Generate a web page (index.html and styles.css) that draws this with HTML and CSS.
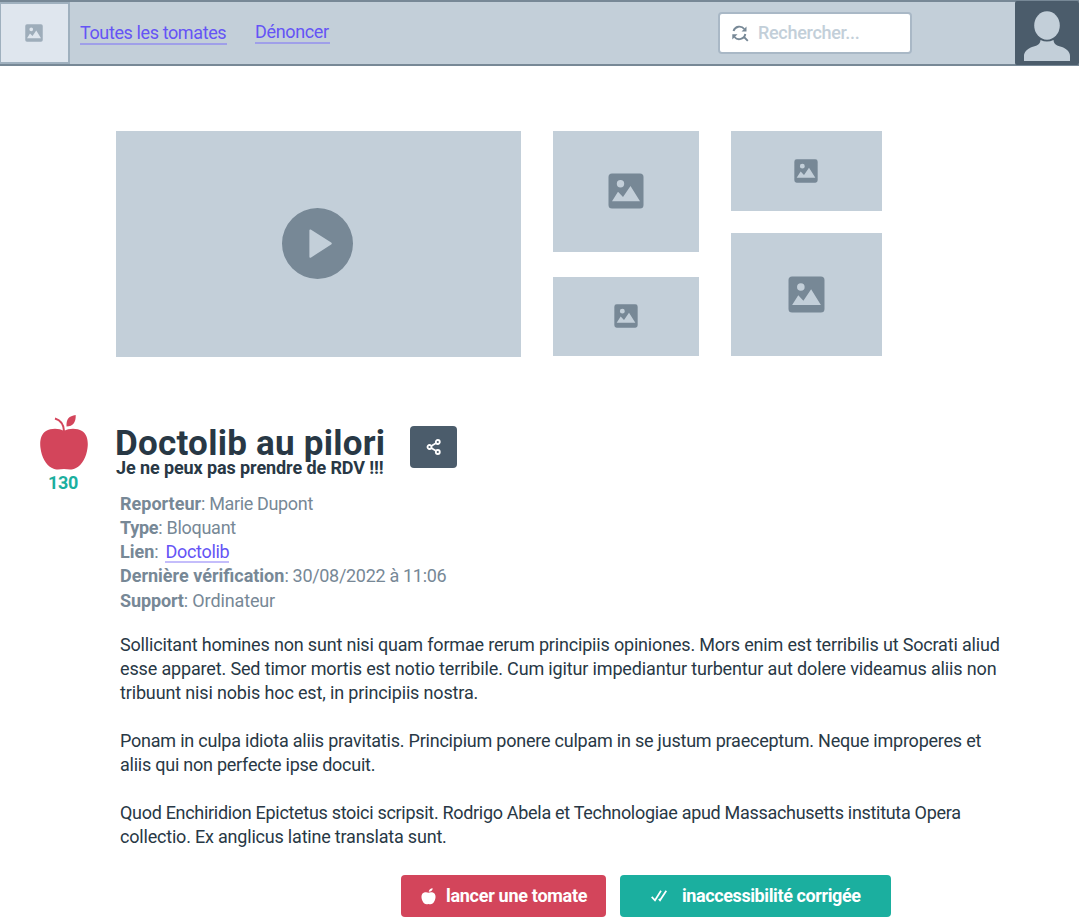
FILE: index.html
```html
<!DOCTYPE html>
<html lang="fr">
<head>
<meta charset="utf-8">
<title>Doctolib au pilori</title>
<link rel="stylesheet" href="styles.css">
</head>
<body>
<svg class="defs" width="0" height="0" aria-hidden="true">
  <symbol id="image" viewBox="0 0 36 36"><path fill-rule="evenodd" d="M4 .5H32a3.500 3.500 0 0 1 3.500 3.500V32a3.500 3.500 0 0 1-3.500 3.500H4a3.500 3.500 0 0 1-3.500-3.500V4a3.500 3.500 0 0 1 3.500-3.500ZM12.500 7a3.700 3.700 0 1 0 0 7.400a3.700 3.700 0 0 0 0-7.400ZM4 28.300H32L22.500 13L15 24L10 18.800Z"/></symbol>
  <symbol id="apple" viewBox="0 0 48 55"><path d="M24 16C29 13 37 13 42 16C47 19 48.500 26 47.500 33C46.500 42 42 50 36 53C31 55.500 28 54 24 54C20 54 17 55.500 12 53C6 50 1.500 42 .5 33C-.5 26 1 19 6 16C11 13 19 13 24 16Z"/><path d="M26.500 11.500C26 4 29 1 35.700 0C36 7 33 11.500 26.500 11.500Z"/><path d="M15 3.500C20 5 23.700 9 24 16" fill="none" stroke="currentColor" stroke-width="2"/></symbol>
</svg>
<header class="topbar">
  <a class="logo"><svg class="icon-logo"><use href="#image"/></svg></a>
  <nav class="nav">
    <a class="link link-all">Toutes les tomates</a>
    <a class="link link-report">Dénoncer</a>
  </nav>
  <div class="search">
    <svg class="icon-search" viewBox="0 0 17 17"><path d="M1.500 6A6.200 6.200 0 0 1 12.300 4M13.300 9A6.200 6.200 0 0 1 2.500 12M11.500 11.500L15.800 15.800" fill="none" stroke="currentColor" stroke-width="1.900"/><path d="M14.500 1.500V6.500H9.500ZM.3 14.500V9.200H5.500Z"/></svg>
    <span>Rechercher...</span>
  </div>
  <div class="avatar"><svg viewBox="0 0 64 64" width="64" height="64"><ellipse cx="32" cy="24.500" rx="12.800" ry="14.200"/><path d="M25.500 39Q32 42 38.500 39C39 44 42 44.500 47 46C52 48 55 51 55 55V60H9V55C9 51 12 48 17 46C22 44.500 25 44 25.500 39Z"/></svg></div>
</header>
<main>
  <section class="gallery">
    <div class="tile video"><svg class="icon-play" viewBox="0 0 70 70"><path fill-rule="evenodd" d="M35 0a35 35 0 1 0 0 70a35 35 0 0 0 0-70ZM28.300 21.200L48.500 34.100Q49.700 35 48.500 36L28.300 49Q27 49.500 27 48V22.300Q27 20.700 28.300 21.200Z"/></svg></div>
    <div class="column">
      <div class="tile tile-a"><svg class="icon-large"><use href="#image"/></svg></div>
      <div class="tile tile-b"><svg class="icon-small"><use href="#image"/></svg></div>
    </div>
    <div class="column column-last">
      <div class="tile tile-c"><svg class="icon-small"><use href="#image"/></svg></div>
      <div class="tile tile-d"><svg class="icon-large icon-larger"><use href="#image"/></svg></div>
    </div>
  </section>
  <article class="report">
    <aside class="votes"><svg class="icon-tomato"><use href="#apple"/></svg><strong>130</strong></aside>
    <div class="content">
      <div class="heading">
        <div class="titles">
          <h1>Doctolib au pilori</h1>
          <h2>Je ne peux pas prendre de RDV !!!</h2>
        </div>
        <button class="share" aria-label="Partager"><svg viewBox="0 0 16 16" width="16" height="16" fill="none" stroke="currentColor"><path d="M5.300 7L9.800 4.200M5.300 9L9.800 11.800" stroke-width="1.600"/><g class="nodes"><circle cx="3.500" cy="8" r="2"/><circle cx="11.800" cy="3" r="2"/><circle cx="11.800" cy="13" r="2"/></g></svg></button>
      </div>
      <ul class="meta">
        <li class="m1"><b>Reporteur</b>: Marie Dupont</li>
        <li class="m2"><b>Type</b>: Bloquant</li>
        <li class="m3"><b>Lien</b>: <a class="link link-site">Doctolib</a></li>
        <li class="m4"><b>Dernière vérification</b>: 30/08/2022 à 11:06</li>
        <li class="m5"><b>Support</b>: Ordinateur</li>
      </ul>
      <div class="body">
        <p><span class="l1">Sollicitant homines non sunt nisi quam formae rerum principiis opiniones. Mors enim est terribilis ut Socrati aliud</span> <span class="l2">esse apparet. Sed timor mortis est notio terribile. Cum igitur impediantur turbentur aut dolere videamus aliis non</span> <span class="l3">tribuunt nisi nobis hoc est, in principiis nostra.</span></p>
        <p><span class="l4">Ponam in culpa idiota aliis pravitatis. Principium ponere culpam in se justum praeceptum. Neque improperes et</span> <span class="l5">aliis qui non perfecte ipse docuit.</span></p>
        <p><span class="l6">Quod Enchiridion Epictetus stoici scripsit. Rodrigo Abela et Technologiae apud Massachusetts instituta Opera</span> <span class="l7">collectio. Ex anglicus latine translata sunt.</span></p>
      </div>
      <div class="actions">
        <button class="btn btn-throw"><svg class="icon-apple" viewBox="0 0 15 17"><path d="M7.500 4.700C9 3.900 12 3.800 13.500 5.500C15.200 7.500 14.600 11 13.200 13.500C12 15.800 10.500 16.800 7.500 16C4.500 16.800 3 15.800 1.800 13.500C.4 11 -.2 7.500 1.500 5.500C3 3.800 6 3.900 7.500 4.700ZM7.700 3.800C7.900 1.800 9.500 .4 11.700 .2C11.600 2.300 10.200 3.800 7.700 3.800Z"/></svg><span>lancer une tomate</span></button>
        <button class="btn btn-fixed"><svg class="icon-check" viewBox="0 0 16 12"><path d="M.7 6.800L4 10.300L10 .8M7.800 9L9 10.300L15.300 .8"/></svg><span>inaccessibilité corrigée</span></button>
      </div>
    </div>
  </article>
</main>
</body>
</html>
```

FILE: styles.css
```css
* { box-sizing: border-box; }
body { margin: 0; background: #fff; color: #283845; font: 18px/24px Roboto, "Liberation Sans", sans-serif; }
.defs { position: absolute; }
svg { display: block; fill: currentColor; flex: none; }
h1, h2, p, ul { margin: 0; padding: 0; }
button { border: 0; padding: 0; font: inherit; color: #fff; display: flex; align-items: center; }

.topbar { width: 1079px; height: 66px; border: solid #778896; border-width: 2px 0; background: #c3cfd9; display: flex; align-items: flex-start; }
.logo { width: 70px; height: 62px; border: 2px solid #9fb0be; border-left-width: 1px; background: #dfe6ee; color: #9eadba; display: flex; align-items: center; justify-content: center; }
.icon-logo { width: 18px; height: 18px; margin-right: 2px; margin-top: -1px; }
.nav { display: flex; gap: 28px; padding: 18px 0 0 10px; width: 648px; }
.link { color: #6554f5; border-bottom: 2px solid #9f9fe9; white-space: nowrap; }
.nav .link { height: 25px; line-height: 26px; }
.link-all { width: 147px; letter-spacing: -.39px; }
.link-report { width: 75px; margin-top: -1px; letter-spacing: -.35px; }
.search { width: 194px; height: 42px; margin-top: 10px; border: 2px solid #a9b8c6; border-radius: 4px; background: #fff; color: #c3cfd9; display: flex; align-items: center; gap: 9px; padding-left: 12px; font-weight: 500; letter-spacing: -.3px; }
.icon-search { width: 17px; height: 17px; color: #778896; }
.avatar { width: 64px; height: 64px; margin: -1px 0 0 auto; border-radius: 2px; overflow: hidden; background: #4b5c6b; color: #c3cfd9; }

.gallery { display: flex; gap: 32px; padding: 65px 0 0 116px; }
.tile { background: #c3cfd9; color: #778896; display: flex; align-items: center; justify-content: center; padding-bottom: 1px; }
.video { width: 405px; height: 226px; }
.icon-play { width: 71px; height: 71px; margin-right: 2px; }
.column { width: 146px; display: flex; flex-direction: column; gap: 25px; }
.column-last { width: 151px; gap: 22px; }
.column-last .tile { padding-right: 1px; }
.tile-a { height: 121px; }
.tile-b { height: 79px; }
.tile-c { height: 80px; padding-bottom: 0; }
.tile-d { height: 123px; }
.icon-large { width: 36px; height: 36px; }
.icon-larger { width: 37px; height: 37px; }
.icon-small { width: 24px; height: 24px; }

.report { display: flex; padding: 58px 0 0 40px; }
.votes { width: 76px; color: #d3455b; }
.icon-tomato { width: 48px; height: 55px; }
.votes strong { display: block; width: 46px; text-align: center; color: #1baf9f; line-height: 25px; letter-spacing: -.4px; }
.heading { display: flex; height: 66px; padding-top: 11px; }
.titles { width: 294px; padding-top: 2px; white-space: nowrap; }
h1 { font-size: 35px; line-height: 32px; font-weight: 700; letter-spacing: .25px; margin-left: -1px; }
h2 { font-size: 18px; line-height: 18px; font-weight: 700; letter-spacing: -.1px; margin-top: -1px; }
.share { width: 47px; height: 42px; border-radius: 4px; background: #4b5c6b; justify-content: center; }
.share svg { margin-left: 1px; }
.nodes { fill: #4b5c6b; stroke-width: 1.8; }

.meta { list-style: none; padding: 11px 0 0 4px; height: 152px; color: #778896; }
.meta li { height: 24px; white-space: nowrap; letter-spacing: -.35px; }
.meta b { letter-spacing: 0; }
.meta .m2, .meta .m2 b { letter-spacing: -.28px; }
.meta .m4 { height: 25px; letter-spacing: -.31px; }
.meta .m5, .meta .m5 b { letter-spacing: -.13px; }
.meta .link { display: inline-block; height: 22px; line-height: 22px; margin-left: 3px; border-color: #c4bdfb; letter-spacing: -.3px; }

.body { padding-left: 4px; height: 242px; white-space: nowrap; }
.body p { margin-bottom: 24px; }
.body span { display: block; }
.l1 { letter-spacing: -.178px; }
.l2 { letter-spacing: -.15px; }
.l3 { letter-spacing: -.15px; }
.l4 { letter-spacing: -.222px; }
.l5 { letter-spacing: -.24px; }
.l6 { letter-spacing: -.304px; }
.l7 { letter-spacing: -.2px; }

.actions { display: flex; gap: 14px; padding-left: 285px; }
.btn { height: 42px; border-radius: 4px; font-weight: 700; white-space: nowrap; }
.btn-throw { width: 205px; background: #d3455b; padding-left: 20px; gap: 10px; letter-spacing: -.29px; }
.btn-fixed { width: 271px; background: #1baf9f; padding-left: 31px; gap: 15px; letter-spacing: -.4px; }
.icon-apple { width: 15px; height: 17px; }
.icon-check { width: 16px; height: 12px; }
.icon-check path { fill: none; stroke: currentColor; stroke-width: 1.7; }
```
